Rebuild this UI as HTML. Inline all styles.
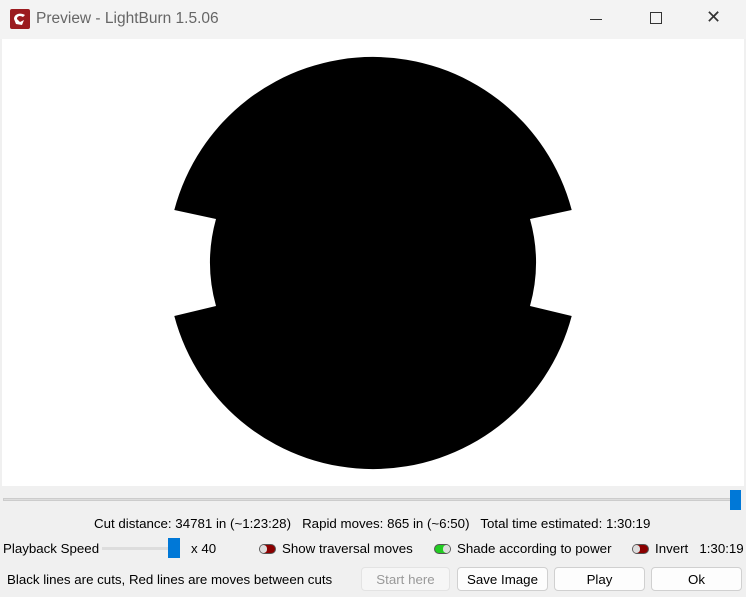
<!DOCTYPE html>
<html><head><style>
body{margin:0;width:746px;height:597px;overflow:hidden;background:#f0f0f0;font-family:"Liberation Sans",sans-serif;font-size:13.3px;color:#000;position:relative}
.a{position:absolute;white-space:nowrap}
.btn{position:absolute;top:567px;height:24px;background:#fdfdfd;border:1px solid #d0d0d0;border-radius:4px;text-align:center;line-height:24px;box-sizing:border-box}
.tg{position:absolute;width:15px;height:8px;border:1px solid #555;border-radius:5px;background:#8b0000}
.tg::before{content:"";position:absolute;left:0;top:0;width:7px;height:8px;border-radius:4px;background:#ddd}
.tg.on::before{left:8px}
</style></head><body>
<div class="a" style="left:0;top:0;width:746px;height:39px;background:#f3f3f3"></div>
<svg class="a" style="left:10px;top:9px" width="20" height="20" viewBox="0 0 20 20"><rect width="20" height="20" rx="2" fill="#9b1b1f"/><path d="M4 10 C4 5 10 3 15 6 L13 8 C10 6 7 7 7 10 L10 13 L14 11 L12 16 L6 15 Z" fill="#fff"/></svg>
<div class="a" style="left:36px;top:10px;font-size:15.5px;color:#666">Preview - LightBurn 1.5.06</div>
<div class="a" style="left:590px;top:19px;width:12px;height:1px;background:#333"></div>
<div class="a" style="left:650px;top:12px;width:10px;height:10px;border:1px solid #333"></div>
<div class="a" style="left:706px;top:7px;font-size:18px;color:#333">✕</div>
<div class="a" style="left:2px;top:39px;width:742px;height:447px;background:#fff"></div>
<svg class="a" style="left:0;top:0" width="746" height="597"><path d="M174.3 210 A205.5 205.5 0 0 1 571.7 210 L530 219 A162 162 0 0 1 530 306 L571.7 316 A205.5 205.5 0 0 1 174.3 316 L216 306 A162 162 0 0 1 216 219 Z" fill="#000"/></svg>
<div class="a" style="left:3px;top:498px;width:730px;height:3px;background:#ddd;border:1px solid #ccc;box-sizing:border-box"></div>
<div class="a" style="left:730px;top:490px;width:11px;height:20px;background:#0078d7"></div>
<div class="a" style="left:94px;top:516px">Cut distance: 34781 in (~1:23:28)&nbsp;&nbsp; Rapid moves: 865 in (~6:50)&nbsp;&nbsp; Total time estimated: 1:30:19</div>
<div class="a" style="left:3px;top:541px">Playback Speed</div>
<div class="a" style="left:102px;top:547px;width:78px;height:3px;background:#ddd"></div>
<div class="a" style="left:168px;top:538px;width:12px;height:20px;background:#0078d7"></div>
<div class="a" style="left:191px;top:541px">x 40</div>
<div class="tg" style="left:259px;top:544px"></div>
<div class="a" style="left:282px;top:541px">Show traversal moves</div>
<div class="tg on" style="left:434px;top:544px;background:#2c2"></div>
<div class="a" style="left:457px;top:541px">Shade according to power</div>
<div class="tg" style="left:632px;top:544px"></div>
<div class="a" style="left:655px;top:541px">Invert&nbsp;&nbsp; 1:30:19</div>
<div class="a" style="left:7px;top:572px">Black lines are cuts, Red lines are moves between cuts</div>
<div class="btn" style="left:361px;width:89px;color:#999;background:#f6f6f6;border-color:#e3e3e3">Start here</div>
<div class="btn" style="left:457px;width:91px">Save Image</div>
<div class="btn" style="left:554px;width:91px">Play</div>
<div class="btn" style="left:651px;width:91px">Ok</div>
</body></html>
